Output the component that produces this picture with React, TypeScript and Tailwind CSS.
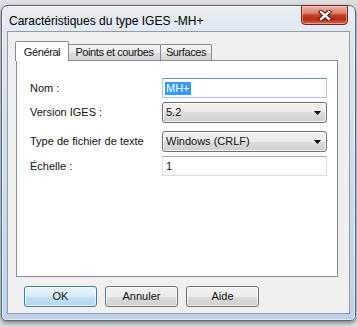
import React from "react";

const label = "text-[11px] leading-[13px] text-[#111]";
const tabLabel = "text-[11px] leading-[13px] text-[#111] tracking-[-0.4px]";

function Arrow() {
  return (
    <svg width="7" height="4" viewBox="0 0 7 4" className="block">
      <path d="M0 0 H7 L3.5 4 Z" fill="#000" />
    </svg>
  );
}

function Combo({ value }: { value: string }) {
  return (
    <div className="w-[165px] h-[21px] rounded-[3px] border border-[#707070] bg-[linear-gradient(to_bottom,#f2f2f2_0%,#ebebeb_50%,#dddddd_50%,#cfcfcf_100%)] shadow-[inset_0_0_0_1px_rgba(255,255,255,0.7)] flex items-center pl-[3px] pr-[5px]">
      <span className={label}>{value}</span>
      <span className="ml-auto">
        <Arrow />
      </span>
    </div>
  );
}

function Btn({ text, def }: { text: string; def?: boolean }) {
  return (
    <div
      className={
        def
          ? "w-[73px] h-[21px] rounded-[3px] border border-[#3c7fb1] bg-[linear-gradient(to_bottom,#e8f4fb_0%,#d9edf8_50%,#c3e2f5_50%,#b3d8f0_100%)] shadow-[inset_0_0_0_1px_rgba(255,255,255,0.6)] flex items-center justify-center"
          : "w-[73px] h-[21px] rounded-[3px] border border-[#707070] bg-[linear-gradient(to_bottom,#f2f2f2_0%,#ebebeb_50%,#dddddd_50%,#cfcfcf_100%)] shadow-[inset_0_0_0_1px_rgba(255,255,255,0.7)] flex items-center justify-center"
      }
    >
      <span className={label}>{text}</span>
    </div>
  );
}

export default function App() {
  return (
    <div
      className="w-[357px] h-[327px] overflow-hidden bg-[#dedfe1] pt-[5px] pl-[1px]"
      style={{ fontFamily: '"Liberation Sans", Arial, sans-serif' }}
    >
      <div className="w-[355px] h-[316px] rounded-t-[7px] rounded-b-[5px] border border-[#56677c] bg-[linear-gradient(to_bottom,#e8edf2_0%,#dbe4ee_15%,#c9dbee_60%,#bcd3ec_100%)] shadow-[inset_0_0_0_1px_rgba(255,255,255,0.55),0_2px_5px_rgba(0,0,0,0.45)] flex flex-col">
        {/* title bar */}
        <div className="h-[25px] flex items-start">
          <span className="mt-[8px] ml-[7px] text-[12px] leading-[14px] text-black">
            Caractéristiques du type IGES -MH+
          </span>
          <div className="ml-auto mr-[7px] -mt-px w-[47px] h-[20px] rounded-b-[4px] border border-[#6b2b22] bg-[linear-gradient(to_bottom,#eeb3a5_0%,#db806b_40%,#c43f25_50%,#b52e17_75%,#dc6a4c_100%)] shadow-[inset_0_0_0_1px_rgba(255,220,210,0.45)] flex items-center justify-center">
            <svg width="14" height="11" viewBox="0 0 14 11">
              <path d="M3 2 L11 9 M11 2 L3 9" stroke="#3e1a15" strokeWidth="4.4" strokeLinecap="square" />
              <path d="M3 2 L11 9 M11 2 L3 9" stroke="#ffffff" strokeWidth="2.4" strokeLinecap="square" />
            </svg>
          </div>
        </div>

        {/* client area */}
        <div className="ml-[5px] w-[343px] h-[283px] border border-[#8e9cad] bg-[#f0f0f0] flex flex-col pt-[9px] pl-[8px]">
          {/* tabs */}
          <div className="h-[20px] -mb-px flex items-end relative z-10">
            <div className="-ml-px w-[54px] h-[20px] bg-white border-l border-t border-r border-[#898c95] rounded-t-[2px] flex justify-center pt-[4px] relative z-20">
              <span className={tabLabel}>Général</span>
            </div>
            <div className="-ml-px mb-px w-[93px] h-[16px] border border-b-0 border-[#898c95] rounded-t-[2px] bg-[linear-gradient(to_bottom,#f3f3f3_0%,#ebebeb_50%,#dedede_50%,#d4d4d4_100%)] flex justify-center pt-[1px]">
              <span className={tabLabel}>Points et courbes</span>
            </div>
            <div className="-ml-px mb-px w-[52px] h-[16px] border border-b-0 border-[#898c95] rounded-t-[2px] bg-[linear-gradient(to_bottom,#f3f3f3_0%,#ebebeb_50%,#dedede_50%,#d4d4d4_100%)] flex justify-center pt-[1px]">
              <span className={tabLabel}>Surfaces</span>
            </div>
          </div>

          {/* tab panel */}
          <div className="w-[322px] h-[217px] bg-white border border-[#898c95] flex flex-col pt-[17px] pl-[13px]">
            <div className="flex items-center">
              <span className={`${label} w-[132px]`}>Nom :</span>
              <div className="w-[165px] h-[20px] border border-[#a9c9e6] border-t-[#5a8fc2] bg-white flex items-center pl-[2px]">
                <span className="bg-[#3399ff] text-white text-[11px] leading-[13px] px-px">MH+</span>
              </div>
            </div>
            <div className="flex items-center mt-[4px]">
              <span className={`${label} w-[132px]`}>Version IGES :</span>
              <Combo value="5.2" />
            </div>
            <div className="flex items-center mt-[8px]">
              <span className={`${label} w-[132px]`}>Type de fichier de texte</span>
              <Combo value="Windows (CRLF)" />
            </div>
            <div className="flex items-center mt-[4px]">
              <span className={`${label} w-[132px]`}>Échelle :</span>
              <div className="w-[165px] h-[20px] border border-[#dbdfe6] border-t-[#abadb3] bg-white flex items-center pl-[3px]">
                <span className={label}>1</span>
              </div>
            </div>
          </div>

          {/* buttons */}
          <div className="flex mt-[9px] ml-[8px] gap-[8px]">
            <Btn text="OK" def />
            <Btn text="Annuler" />
            <Btn text="Aide" />
          </div>
        </div>
      </div>
    </div>
  );
}
